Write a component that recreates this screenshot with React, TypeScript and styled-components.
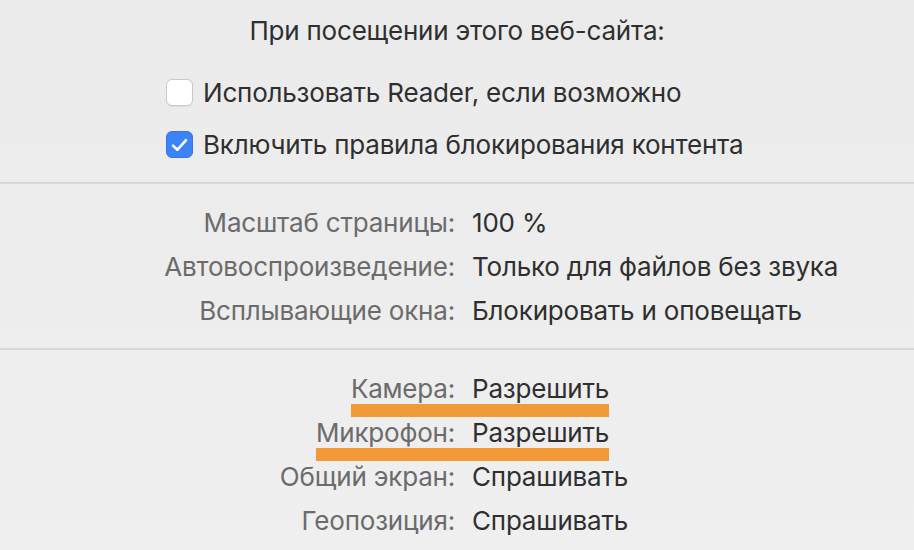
import React from "react";
import styled, { createGlobalStyle, css } from "styled-components";

const GlobalStyle = createGlobalStyle`
  html, body {
    margin: 0;
    padding: 0;
  }
  body {
    background: linear-gradient(180deg, #ebebeb 0%, #efeff0 100%);
    font-family: "Inter", "Noto Sans", "DejaVu Sans", sans-serif;
    -webkit-font-smoothing: antialiased;
  }
`;

const GAP = 17;

type Setting = { label: string; value: string; marked?: boolean };

const viewSettings: Setting[] = [
  { label: "Масштаб страницы:", value: "100 %" },
  { label: "Автовоспроизведение:", value: "Только для файлов без звука" },
  { label: "Всплывающие окна:", value: "Блокировать и оповещать" },
];

const permissionSettings: Setting[] = [
  { label: "Камера:", value: "Разрешить", marked: true },
  { label: "Микрофон:", value: "Разрешить", marked: true },
  { label: "Общий экран:", value: "Спрашивать" },
  { label: "Геопозиция:", value: "Спрашивать" },
];

export default function App() {
  return (
    <>
      <GlobalStyle />
      <Page>
        <Heading>При посещении этого веб-сайта:</Heading>
        <Options>
          <Option>
            <Checkbox />
            Использовать Reader, если возможно
          </Option>
          <Option>
            <Checkbox $checked>
              <svg width="17" height="14" viewBox="0 0 17 14">
                <path
                  d="M2 7.6 L6.3 11.8 L15 2.2"
                  fill="none"
                  stroke="#fff"
                  strokeWidth="2.6"
                  strokeLinecap="round"
                  strokeLinejoin="round"
                />
              </svg>
            </Checkbox>
            Включить правила блокирования контента
          </Option>
        </Options>
        <Divider />
        <Section $top={16.5} $bottom={15.5}>
          {viewSettings.map((s) => (
            <Row key={s.label}>
              <Label $marked={s.marked}>{s.label}</Label>
              <Value $marked={s.marked}>{s.value}</Value>
            </Row>
          ))}
        </Section>
        <Divider />
        <Section $top={17} $bottom={0}>
          {permissionSettings.map((s) => (
            <Row key={s.label}>
              <Label $marked={s.marked}>{s.label}</Label>
              <Value $marked={s.marked}>{s.value}</Value>
            </Row>
          ))}
        </Section>
      </Page>
    </>
  );
}

const Page = styled.div`
  width: 914px;
  height: 550px;
  overflow: hidden;
  font-size: 26px;
  letter-spacing: -0.2px;
`;

const Heading = styled.div`
  padding-top: 14.5px;
  line-height: 32px;
  text-align: center;
  color: #2f2f2f;
`;

const Options = styled.div`
  display: flex;
  flex-direction: column;
  padding: 19.25px 0 11.25px 166px;
`;

const Option = styled.div`
  display: flex;
  align-items: center;
  gap: 10px;
  height: 52.5px;
  color: #2f2f2f;
`;

const Checkbox = styled.span<{ $checked?: boolean }>`
  flex: none;
  width: 27px;
  height: 27px;
  border-radius: 6px;
  box-sizing: border-box;
  display: flex;
  align-items: center;
  justify-content: center;
  ${(p) =>
    p.$checked
      ? css`
          background: #3b83f6;
          border: 1px solid #3578e5;
        `
      : css`
          background: #ffffff;
          border: 1px solid #c9c9c9;
          box-shadow: 0 0.5px 1px rgba(0, 0, 0, 0.06);
        `}
`;

const Divider = styled.div`
  height: 2px;
  background: #d7d7d7;
`;

const Section = styled.div<{ $top: number; $bottom: number }>`
  padding-top: ${(p) => p.$top}px;
  padding-bottom: ${(p) => p.$bottom}px;
`;

const Row = styled.div`
  display: grid;
  grid-template-columns: 455px max-content;
  column-gap: ${GAP}px;
  line-height: 44px;
  height: 44px;
`;

const mark = css`
  &::after {
    content: "";
    position: absolute;
    top: 37px;
    height: 13px;
    left: 0;
    background: #f29a38;
  }
`;

const Label = styled.span<{ $marked?: boolean }>`
  justify-self: end;
  position: relative;
  color: #6b6b6b;
  ${(p) =>
    p.$marked &&
    css`
      ${mark}
      &::after {
        right: -${GAP}px;
      }
    `}
`;

const Value = styled.span<{ $marked?: boolean }>`
  justify-self: start;
  position: relative;
  color: #2f2f2f;
  ${(p) =>
    p.$marked &&
    css`
      ${mark}
      &::after {
        right: 0;
      }
    `}
`;
